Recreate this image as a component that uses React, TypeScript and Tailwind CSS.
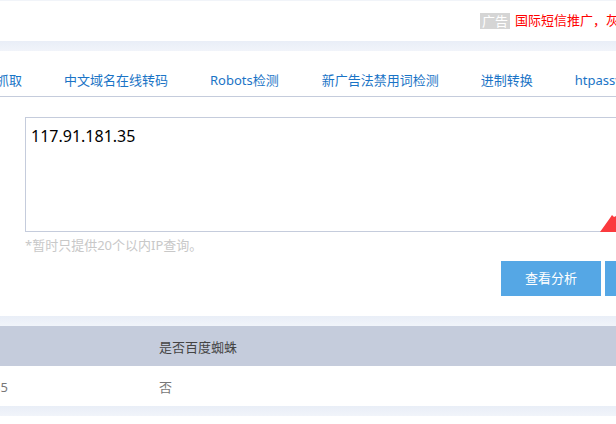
export default function App() {
  const tabs = ["抓取", "中文域名在线转码", "Robots检测", "新广告法禁用词检测", "进制转换", "htpasswd生成"];
  return (
    <div className="h-[424px] w-[616px] overflow-hidden bg-white font-['Noto_Sans','Noto_Sans_CJK_SC',sans-serif]">
      <div className="h-px bg-[#f1f4f9]" />
      <div className="flex h-10 items-center justify-end whitespace-nowrap">
        <div className="flex w-[136px] shrink-0 items-center overflow-hidden text-[13px]">
          <span className="bg-[#d5d5d5] px-[2px] text-white leading-4">广告</span>
          <span className="ml-[5px] text-[#ff0000]">国际短信推广，灰度发布</span>
        </div>
      </div>
      <div className="h-[10px] bg-gradient-to-b from-[#e9eef7] to-[#f1f4fa]" />
      <div className="flex h-[46px] items-center gap-[42px] overflow-hidden whitespace-nowrap border-b border-[#c5ccdc] pt-[15px] text-[13px] text-[#1a74c6]">
        {tabs.map((t, i) => (
          <span key={t} className={i === 0 ? "-ml-1 shrink-0" : i === 2 ? "shrink-0 pr-px" : "shrink-0"}>{t}</span>
        ))}
      </div>
      <div className="relative h-[219px] overflow-hidden pl-[25px] pt-5">
        <div className="h-[115px] w-[700px] border border-[#c5ccdc] bg-white px-[5px] text-base leading-[36px] text-black">
          <span className="block">117.91.181.35</span>
        </div>
        <p className="mt-[2px] text-[13px] leading-[22px] text-[#c8c8c8]">*暂时只提供20个以内IP查询。</p>
        <div className="mt-[5px] -mr-[101px] flex justify-end gap-1">
          <button className="h-[35px] w-[100px] bg-[#55a7e5] text-[13px] text-white">查看分析</button>
          <button className="h-[35px] w-[112px] bg-[#55a7e5]" />
        </div>
        <svg className="absolute left-[600px] top-[118px]" width="16" height="17" viewBox="0 0 16 17">
          <path d="M0 17 L10 3 L12 0 L14 2 L16 1 L16 17 Z" fill="#fb3a3e" />
        </svg>
      </div>
      <div className="h-[10px] bg-gradient-to-b from-[#e9eef7] to-[#f1f4fa]" />
      <div className="flex h-10 items-center bg-[#c5ccdc] pl-[159px] pt-[3px] text-[13px] text-[#444444]">是否百度蜘蛛</div>
      <div className="relative flex h-10 items-center pl-[159px] pt-[3px] text-[13px] text-[#777777]">
        <span className="absolute -left-[7px]">35</span>
        <span>否</span>
      </div>
      <div className="h-[10px] bg-gradient-to-b from-[#e9eef7] to-[#f1f4fa]" />
    </div>
  );
}
